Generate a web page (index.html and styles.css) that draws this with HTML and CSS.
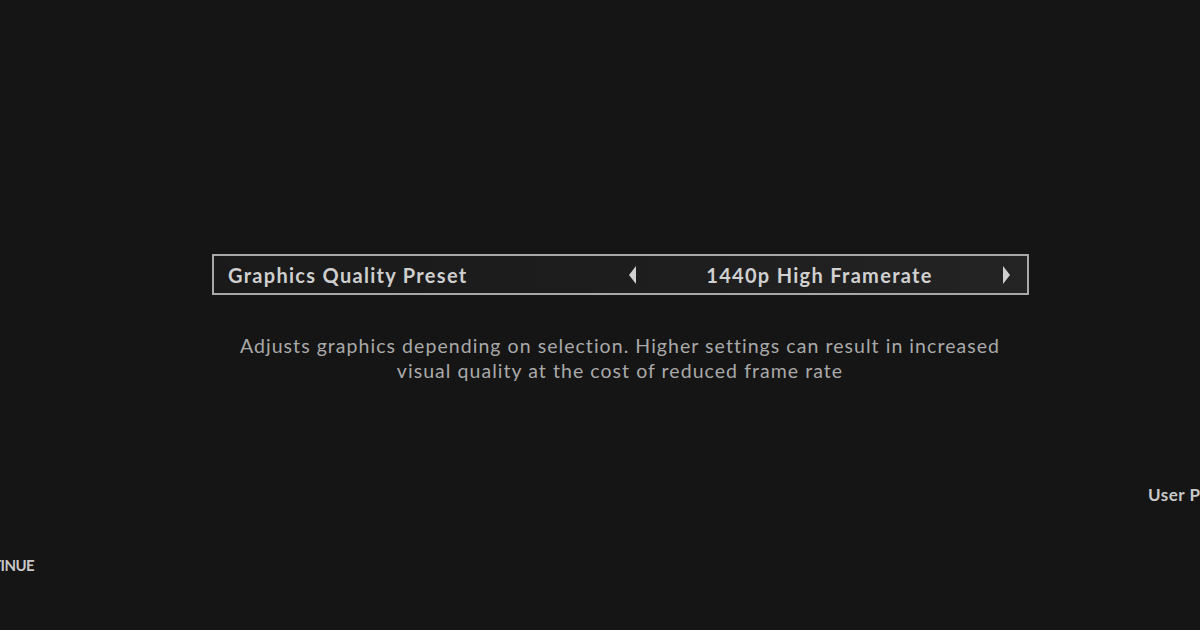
FILE: index.html
```html
<!DOCTYPE html>
<html>
<head>
<meta charset="utf-8">
<link rel="stylesheet" href="styles.css">
</head>
<body>
<div class="screen">
  <div class="setting">
    <span class="label">Graphics Quality Preset</span>
    <div class="selector">
      <svg class="arrow" width="9" height="20" viewBox="0 0 9 20"><path d="M8 1 L1 10 L8 19 Z" fill="#d0d0d0"/></svg>
      <span class="value">1440p High Framerate</span>
      <svg class="arrow" width="9" height="20" viewBox="0 0 9 20"><path d="M1 1 L8 10 L1 19 Z" fill="#d0d0d0"/></svg>
    </div>
  </div>
  <p class="desc">Adjusts graphics depending on selection. Higher settings can result in increased<br>visual quality at the cost of reduced frame rate</p>
  <div class="side-right"><span class="side-label">User Presets</span></div>
  <div class="footer"><span class="continue">CONTINUE</span></div>
</div>
</body>
</html>
```
FILE: styles.css
```css
html, body { margin: 0; padding: 0; }
body { background: #151515; width: 1200px; height: 630px; overflow: hidden; font-family: Lato, "Liberation Sans", sans-serif; }
.screen { width: 1200px; height: 630px; display: flex; flex-direction: column; overflow: hidden; }
.setting {
  margin: 254px 0 0 212px;
  width: 813px; height: 37px;
  border: 2px solid #a8a8a8;
  background: linear-gradient(90deg, #1a1a1a 0%, #1e1e1e 60%, #242424 100%);
  display: flex; align-items: center;
  box-sizing: content-box;
}
.label { color: #cfcfcf; font-weight: 700; font-size: 20px; margin-left: 14px; letter-spacing: 1.3px; }
.selector { margin-left: auto; width: 383px; margin-right: 16px; display: flex; align-items: center; justify-content: space-between; }
.arrow { display: block; }
.value { color: #d0d0d0; font-weight: 700; font-size: 20px; letter-spacing: 1.3px; }
.desc { margin: 38px 0 0 0; width: 1240px; text-align: center; color: #a9a9a9; font-size: 19.5px; line-height: 25px; letter-spacing: 1.05px; }
.side-right { margin: 101px 0 0 1148px; white-space: nowrap; }
.side-label { color: #c8c8c8; font-weight: 700; font-size: 17px; letter-spacing: 0.5px; }
.footer { margin: 51px 0 0 0; width: 34px; display: flex; justify-content: flex-end; white-space: nowrap; }
.continue { color: #c8c8c8; font-size: 15px; font-weight: 700; letter-spacing: -0.6px; }
```
